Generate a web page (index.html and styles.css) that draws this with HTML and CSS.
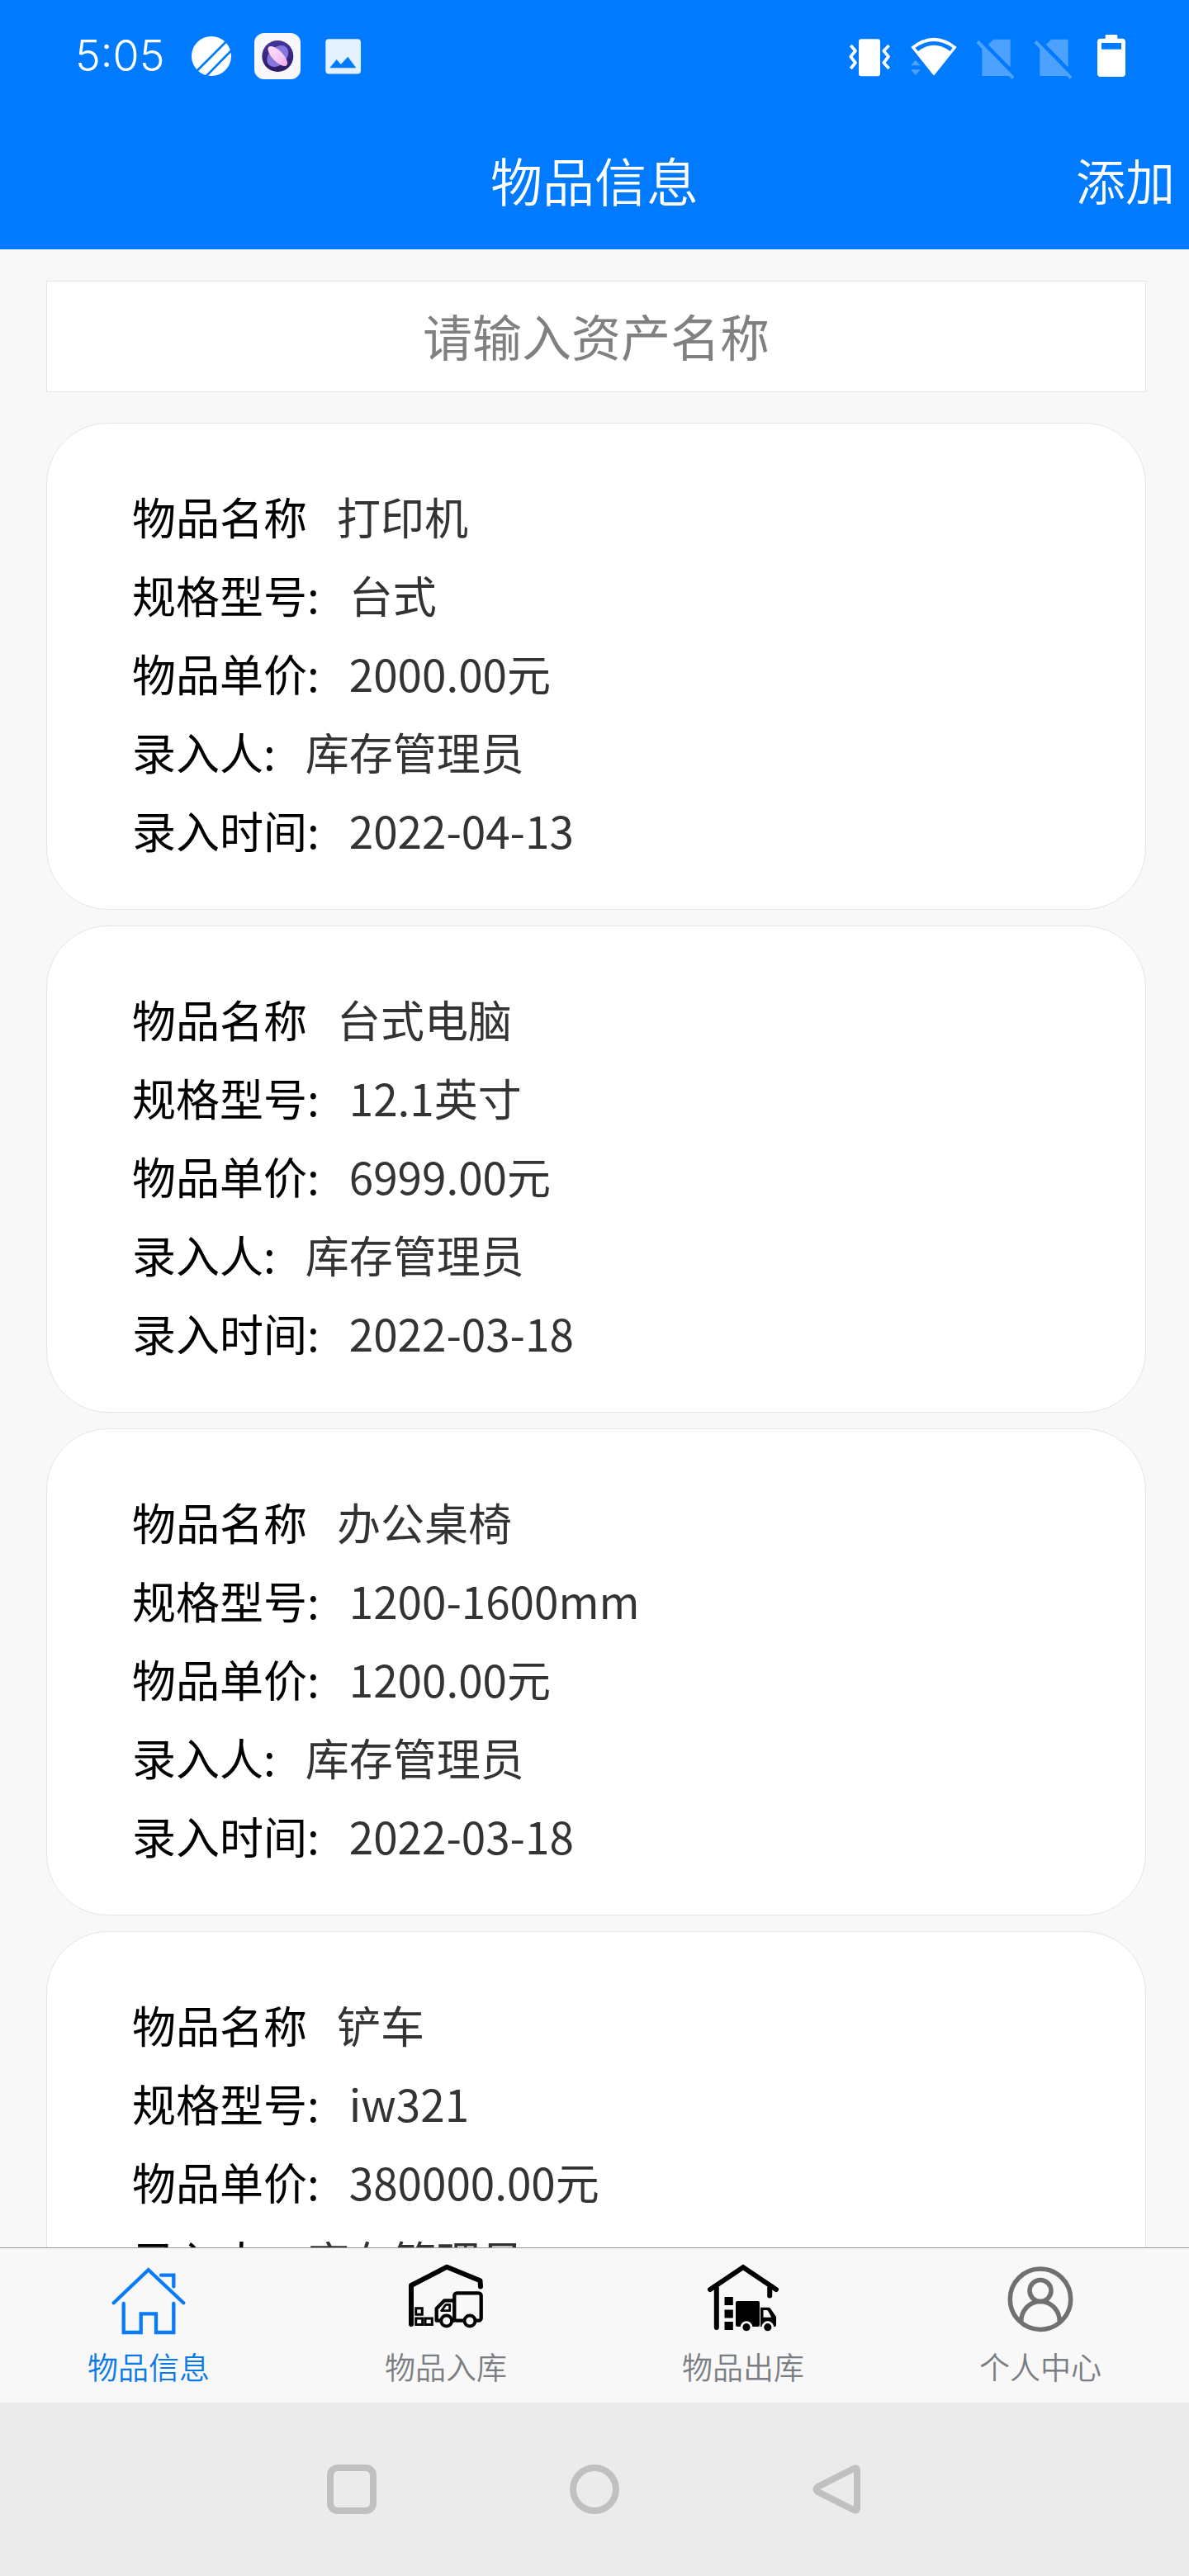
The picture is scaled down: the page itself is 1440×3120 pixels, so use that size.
FILE: index.html
```html
<!DOCTYPE html>
<html lang="zh-CN">
<head>
<meta charset="utf-8">
<meta name="viewport" content="width=device-width, initial-scale=1">
<title>物品信息</title>
<link rel="stylesheet" href="styles.css">
</head>
<body>
<div class="app">
  <header class="top">
    <div class="status">
      <div class="status-left">
        <time class="clock">5:05</time>
        <svg class="status-icon" viewBox="0 -2 56 56" aria-hidden="true">
          <circle cx="28" cy="26" r="24" fill="#fff"/>
          <path d="M10 44.300L47 7.300M21 51L54 17.300" stroke="#007aff" stroke-width="2.700"/>
        </svg>
        <svg class="status-icon" viewBox="0 -2 56 56" aria-hidden="true">
          <defs>
            <linearGradient id="orb" x1="0" y1="0" x2="0" y2="1"><stop offset="0" stop-color="#4634a0"/><stop offset="1" stop-color="#2c1a62"/></linearGradient>
            <linearGradient id="ring" x1="0" y1="0" x2="1" y2="0"><stop offset="0" stop-color="#ffdcf6"/><stop offset=".6" stop-color="#f5c8f5"/><stop offset="1" stop-color="#f2a8e8"/></linearGradient>
          </defs>
          <rect y="-2" width="56" height="56" rx="12" fill="#f8f8fa"/>
          <circle cx="28.300" cy="26" r="19" fill="url(#orb)"/>
          <ellipse cx="28.300" cy="26" rx="15" ry="10.500" transform="rotate(-45 28.300 26)" fill="#8577dc"/>
          <ellipse cx="28.300" cy="26" rx="15.500" ry="6.500" transform="rotate(46 28.300 26)" fill="url(#ring)"/>
        </svg>
        <svg class="status-icon" viewBox="0 -2 56 56" aria-hidden="true">
          <rect x="6.300" y="5.300" width="42.700" height="42.200" rx="4" fill="#e5f1ff"/>
          <path d="M11.300 40.300L19.700 30L24.700 36L33.300 26.700L43.300 40.300Z" fill="#007aff"/>
        </svg>
      </div>
      <div class="status-right">
        <svg class="status-icon" viewBox="0 -2 56 56" aria-hidden="true">
          <rect x="15" y="5.300" width="26" height="45" rx="3" fill="#fff"/>
          <path d="M5.300 13L11 19.500L5.300 26.700L11 34L5.300 41M51.700 13L45.300 19.500L51 26.700L45.300 34L51.700 41" fill="none" stroke="#fff" stroke-width="3.700" stroke-linejoin="round"/>
        </svg>
        <svg class="status-icon" viewBox="0 -2 56 56" aria-hidden="true">
          <path fill="#fff" fill-rule="evenodd" d="M.3 15Q28 -7.600 55.700 15L29 48.500Q28 49.500 27 48.500ZM5.300 16L9 20Q28 5.500 47.700 20L50.700 16Q28 0 5.300 16Z"/>
          <path fill="#fff" opacity=".3" d="M0 37.300L5.700 30.700L11.700 37.300ZM0 42.300H11.700L5.700 49Z"/>
        </svg>
        <svg class="status-icon narrow" viewBox="0 -2 48 56" aria-hidden="true">
          <path fill="#fff" opacity=".3" d="M22.300 5.700H41Q42.700 5.700 42.700 7.400V39.500L15.700 12ZM1.500 10L4.300 6.800L47.500 51L44.700 54L41 50H8.300V17Z"/>
        </svg>
        <svg class="status-icon narrow" viewBox="0 -2 48 56" aria-hidden="true">
          <path fill="#fff" opacity=".3" d="M22.300 5.700H41Q42.700 5.700 42.700 7.400V39.500L15.700 12ZM1.500 10L4.300 6.800L47.500 51L44.700 54L41 50H8.300V17Z"/>
        </svg>
        <svg class="status-icon narrow" viewBox="0 -2 48 56" aria-hidden="true">
          <rect x="17.700" y="0" width="14.600" height="8" rx="1" fill="#fff"/>
          <rect x="8" y="4.700" width="34" height="46.300" rx="4" fill="#fff"/>
          <rect x="13" y="10" width="24" height="7.700" fill="#007aff"/>
        </svg>
      </div>
    </div>
    <div class="titlebar">
      <h1 class="title">物品信息</h1>
      <button class="add" type="button">添加</button>
    </div>
  </header>

  <main class="content">
    <input class="search" type="text" placeholder="请输入资产名称" aria-label="请输入资产名称">
    <div class="list">
      <dl class="card">
        <div class="row"><dt>物品名称</dt><dd>打印机</dd></div>
        <div class="row"><dt>规格型号:</dt><dd>台式</dd></div>
        <div class="row"><dt>物品单价:</dt><dd>2000.00元</dd></div>
        <div class="row"><dt>录入人:</dt><dd>库存管理员</dd></div>
        <div class="row"><dt>录入时间:</dt><dd>2022-04-13</dd></div>
      </dl>
      <dl class="card">
        <div class="row"><dt>物品名称</dt><dd>台式电脑</dd></div>
        <div class="row"><dt>规格型号:</dt><dd>12.1英寸</dd></div>
        <div class="row"><dt>物品单价:</dt><dd>6999.00元</dd></div>
        <div class="row"><dt>录入人:</dt><dd>库存管理员</dd></div>
        <div class="row"><dt>录入时间:</dt><dd>2022-03-18</dd></div>
      </dl>
      <dl class="card">
        <div class="row"><dt>物品名称</dt><dd>办公桌椅</dd></div>
        <div class="row"><dt>规格型号:</dt><dd>1200-1600mm</dd></div>
        <div class="row"><dt>物品单价:</dt><dd>1200.00元</dd></div>
        <div class="row"><dt>录入人:</dt><dd>库存管理员</dd></div>
        <div class="row"><dt>录入时间:</dt><dd>2022-03-18</dd></div>
      </dl>
      <dl class="card">
        <div class="row"><dt>物品名称</dt><dd>铲车</dd></div>
        <div class="row"><dt>规格型号:</dt><dd>iw321</dd></div>
        <div class="row"><dt>物品单价:</dt><dd>380000.00元</dd></div>
        <div class="row"><dt>录入人:</dt><dd>库存管理员</dd></div>
      </dl>
    </div>
  </main>

  <nav class="tabs">
    <a class="tab active" href="#items" aria-current="page">
      <svg class="tab-icon" viewBox="0 0 90 90" fill="none" stroke="#0a7bf8" stroke-width="4.300" stroke-linecap="round" aria-hidden="true">
        <path d="M2.700 49.300L44.700 9.300L87.300 49.300M60 15.700H75.300V29.500M14.700 50V85H35.700V62.300H54V85H75.300V50"/>
      </svg>
      <span>物品信息</span>
    </a>
    <a class="tab" href="#inbound">
      <svg class="tab-icon" viewBox="0 0 90 90" fill="none" stroke="#000" stroke-linejoin="round" aria-hidden="true">
        <path d="M3 75V28L46.300 5.700L86.500 22.300L87 29.500" stroke-width="6" stroke-linecap="round"/>
        <path d="M8.700 55.700h7.600v7.600h-7.600zM8.700 68h8v7.600h-8zM20 68h8.300v7.600h-8.300z" stroke-width="3" stroke-linejoin="miter"/>
        <rect x="55.300" y="37.300" width="32.400" height="33.400" rx="3" stroke-width="4.300"/>
        <path d="M55.300 46.300H43.300L33.700 56V70.700H56" stroke-width="4.300"/>
        <path d="M49.700 51.300H45L39.700 58.700H49.700Z" stroke-width="2.800"/>
        <circle cx="45.700" cy="71" r="6.500" fill="#f8f8f8" stroke-width="4"/>
        <circle cx="74" cy="71" r="6.500" fill="#f8f8f8" stroke-width="4"/>
      </svg>
      <span>物品入库</span>
    </a>
    <a class="tab" href="#outbound">
      <svg class="tab-icon" viewBox="0 0 90 90" aria-hidden="true">
        <path d="M5 33L45 6L85 33M12.800 31V79M77.200 31V40.500" fill="none" stroke="#000" stroke-width="6" stroke-linecap="round"/>
        <path d="M22.500 42h10.300v10h-10.300zM22.500 57.500h10.300v10h-10.300zM22.500 72h10.300v10h-10.300z"/>
        <rect x="36" y="47" width="29" height="31" rx="2"/>
        <path fill-rule="evenodd" d="M66 54.700H76Q77.500 54.700 78.500 56.500L85 66V76Q85 78 83 78H66ZM69.500 58V66.700H79.300L75.500 59.500Q74.800 58 73.500 58Z"/>
        <g stroke="#f8f8f8" stroke-width="2.800"><circle cx="49" cy="78.700" r="6"/><circle cx="74.800" cy="78.700" r="6"/></g>
      </svg>
      <span>物品出库</span>
    </a>
    <a class="tab" href="#me">
      <svg class="tab-icon" viewBox="0 0 90 90" fill="none" stroke="#707070" stroke-width="5.500" aria-hidden="true">
        <circle cx="45" cy="44.700" r="36.700"/>
        <circle cx="45" cy="34.500" r="13"/>
        <path d="M21.700 72C21.700 58 32 47.500 45 47.500S68.300 58 68.300 72"/>
      </svg>
      <span>个人中心</span>
    </a>
  </nav>

  <div class="sysnav">
    <button class="key" type="button" aria-label="最近任务">
      <svg viewBox="0 0 62 62"><rect x="5" y="5" width="52" height="52" rx="9"/></svg>
    </button>
    <button class="key" type="button" aria-label="主屏幕">
      <svg viewBox="0 0 62 62"><circle cx="31" cy="31" r="26"/></svg>
    </button>
    <button class="key" type="button" aria-label="返回">
      <svg viewBox="0 0 62 62"><path d="M52 5.500L7.500 28Q3.500 31 7.500 34L52 56.500Q55 57 55 54V8Q55 5 52 5.500Z"/></svg>
    </button>
  </div>
</div>
</body>
</html>
```
FILE: styles.css
```css
* {
  box-sizing: border-box;
}

body {
  margin: 0;
  background: #f8f8f8;
  color: #000;
  font-family: "Noto Sans CJK SC", sans-serif;
}

button {
  margin: 0;
  padding: 0;
  border: 0;
  background: none;
  font: inherit;
  color: inherit;
}

.app {
  display: flex;
  flex-direction: column;
  height: 100vh;
}

.top {
  flex: none;
  background: #007aff;
  color: #fff;
}

.status {
  display: flex;
  align-items: center;
  justify-content: space-between;
  padding: 40px 71px 44px 91px;
}

.status-left,
.status-right {
  display: flex;
  align-items: center;
}

.status-left {
  gap: 24px;
}

.status-right {
  gap: 22px;
}

.status-icon {
  display: block;
  width: 56px;
  height: 56px;
}

.status-icon.narrow {
  width: 48px;
}

.clock {
  width: 113px;
  font-family: Inter, sans-serif;
  font-weight: 300;
  font-size: 52px;
  line-height: 56px;
}

.titlebar {
  display: grid;
  grid-template-columns: 1fr auto 1fr;
  align-items: center;
  padding: 32px 17px 40px;
}

.title {
  grid-column: 2;
  margin: 0;
  font-weight: 350;
  font-size: 63px;
  line-height: 90px;
}

.add {
  justify-self: end;
  font-weight: 350;
  font-size: 60px;
  line-height: 90px;
}

.content {
  flex: 1;
  min-height: 0;
  overflow: hidden;
  padding: 38px 52px 0 56px;
}

.search {
  display: block;
  width: 100%;
  height: 135px;
  padding: 0 0 4px;
  border: 1px solid #e5e5e5;
  border-radius: 0;
  background: #fff;
  color: #333;
  font-family: inherit;
  font-size: 60px;
  text-align: center;
}

.search::placeholder {
  color: #808080;
  opacity: 1;
}

.list {
  display: flex;
  flex-direction: column;
  gap: 19px;
  padding-top: 37px;
}

.card {
  margin: 0;
  padding: 65px 103px 48px;
  border: 1px solid #e5e5e5;
  border-radius: 75px;
  background: #fff;
}

.row {
  display: flex;
  gap: 36px;
  font-size: 53px;
  line-height: 95px;
}

.row dd {
  margin: 0;
  color: #333;
}

.tabs {
  flex: none;
  display: grid;
  grid-template-columns: repeat(4, 1fr);
  border-top: 1px solid #979797;
  background: #f8f8f8;
}

.tab {
  display: flex;
  flex-direction: column;
  align-items: center;
  gap: 12px;
  padding: 17px 0 20px;
  color: #7a7e83;
  font-weight: 350;
  font-size: 37px;
  line-height: 48px;
  text-decoration: none;
}

.tab.active {
  color: #0a78e8;
}

.tab-icon {
  display: block;
  width: 90px;
  height: 90px;
}

.sysnav {
  flex: none;
  display: flex;
  justify-content: center;
  gap: 232px;
  padding: 74px 0;
  background: #ebebeb;
}

.key svg {
  display: block;
  width: 62px;
  height: 62px;
  fill: none;
  stroke: #c0c0c0;
  stroke-width: 8;
}
```
